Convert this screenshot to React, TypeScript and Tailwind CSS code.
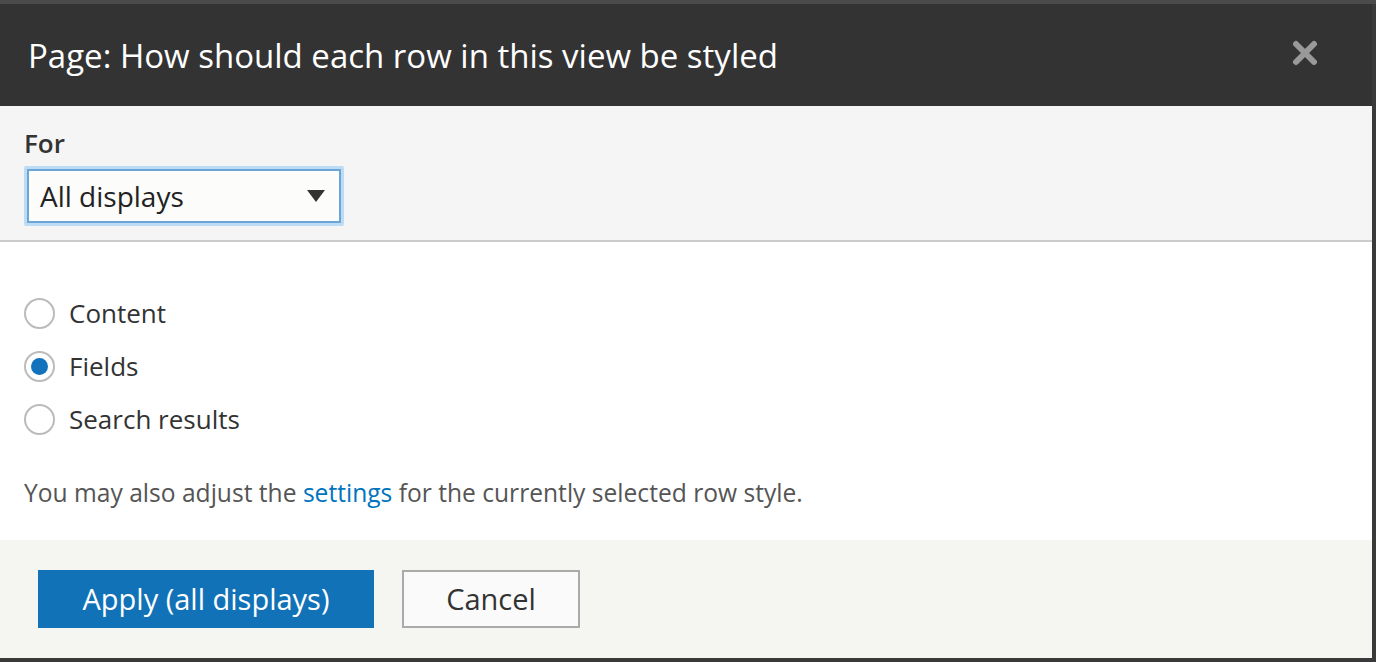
export default function App() {
  const options = [
    { label: "Content", checked: false },
    { label: "Fields", checked: true },
    { label: "Search results", checked: false },
  ];

  return (
    <div className="h-[662px] w-[1376px] overflow-hidden bg-[#3a3a3a] font-['Open_Sans',sans-serif]">
      <div className="h-[4px] bg-[#4b4b4b]" />
      <div className="flex h-[654px] w-[1372px] flex-col bg-white">
        {/* title bar */}
        <div className="flex h-[102px] shrink-0 items-center justify-between bg-[#333333] pl-[28px] pr-[54px]">
          <h1 className="text-[33px] leading-none text-white">Page: How should each row in this view be styled</h1>
          <svg width="26" height="26" viewBox="0 0 26 26" className="mb-[4px]">
            <path d="M4 4 L22 22 M22 4 L4 22" stroke="#999999" strokeWidth="6" strokeLinecap="round" />
          </svg>
        </div>

        {/* display selector */}
        <div className="h-[136px] shrink-0 border-b-2 border-[#cccccc] bg-[#f5f5f5] px-[24px] pt-[20px]">
          <div className="text-[26px] font-semibold leading-[34px] text-[#333333]">For</div>
          <div className="mt-[6px] w-[320px] rounded-[2px] border-[3px] border-[#bcdcf6]">
            <div className="flex h-[54px] items-center justify-between border-2 border-[#6aa5d6] bg-[#fcfcfa] pl-[11px] pr-[14px]">
              <span className="text-[28px] text-[#222222]">All displays</span>
              <svg width="18" height="12" viewBox="0 0 18 12">
                <path d="M0 0 H18 L9 12 Z" fill="#333333" />
              </svg>
            </div>
          </div>
        </div>

        {/* row style options */}
        <div className="flex-1 px-[24px] pt-[56px]">
          <div className="flex flex-col gap-[22px]">
            {options.map((o) => (
              <label key={o.label} className="flex h-[31px] items-center gap-[14px]">
                <span className="flex h-[31px] w-[31px] items-center justify-center rounded-full border-2 border-[#bbbbbb] bg-white">
                  {o.checked && <span className="h-[17px] w-[17px] rounded-full bg-[#1272bb]" />}
                </span>
                <span className="text-[26px] text-[#333333]">{o.label}</span>
              </label>
            ))}
          </div>
          <p className="mt-[41px] text-[24.6px] leading-[34px] text-[#555555]">
            You may also adjust the <a className="text-[#0074bd]">settings</a> for the currently selected row style.
          </p>
        </div>

        {/* buttons */}
        <div className="flex h-[118px] shrink-0 items-start gap-[28px] bg-[#f5f5f2] pl-[38px] pt-[30px]">
          <button className="h-[58px] w-[336px] bg-[#1172b8] text-[29px] text-white">Apply (all displays)</button>
          <button className="h-[58px] w-[178px] border-2 border-[#aaaaaa] bg-[#fafafa] text-[29px] text-[#333333]">Cancel</button>
        </div>
      </div>
    </div>
  );
}
